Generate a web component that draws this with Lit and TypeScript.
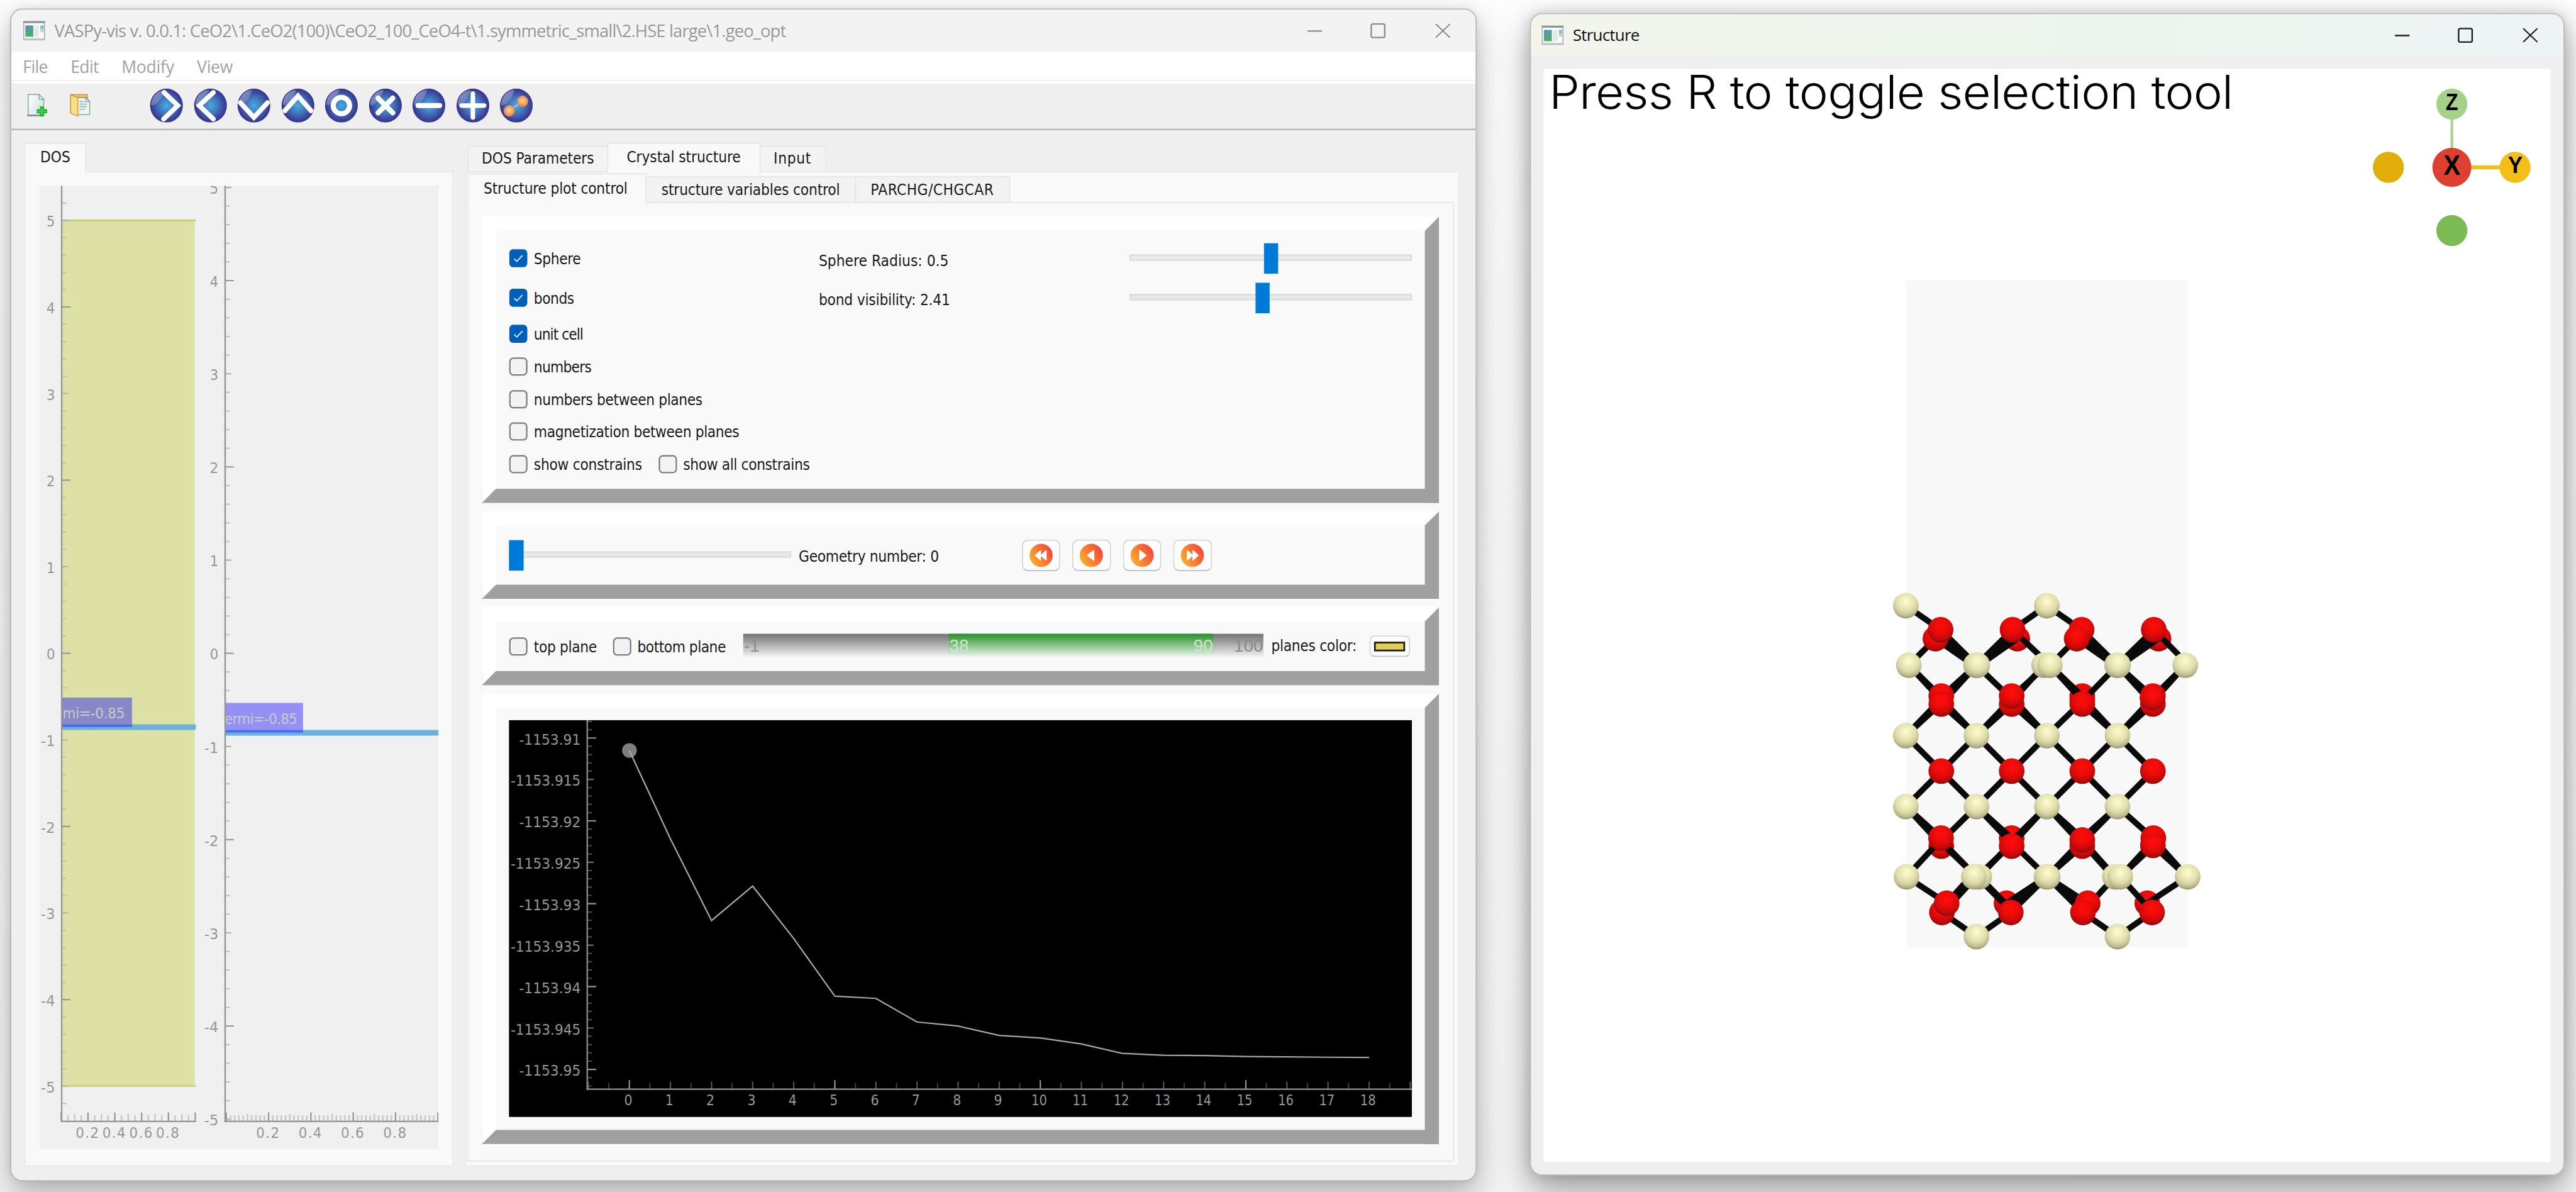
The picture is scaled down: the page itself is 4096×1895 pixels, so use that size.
import { LitElement, html, svg, css } from "lit";
import { customElement, property } from "lit/decorators.js";

const UI_FONT = `"DejaVu Sans Condensed", "DejaVu Sans", "Noto Sans", sans-serif`;

/** A single line of text tracked (or stretched) so that it occupies exactly `w` pixels. */
@customElement("fit-label")
class FitLabel extends LitElement {
  @property({ type: Number }) w = 0;
  @property() text = "";
  @property({ type: Boolean }) stretch = false;
  static styles = css`
    :host { display: inline-block; white-space: pre; }
    .t { display: inline-block; transform-origin: 0 50%; }
  `;
  updated() {
    const el = this.renderRoot.querySelector(".t") as HTMLElement;
    el.style.letterSpacing = this.stretch ? "-0.01em" : "0px";
    const n = this.text.length;
    if (!this.w || n < 2) return;
    if (this.stretch) {
      el.style.transform = `scaleX(${this.w / el.offsetWidth})`;
    } else {
      el.style.letterSpacing = `${(this.w - el.offsetWidth) / (n - 1)}px`;
    }
  }
  render() {
    return html`<span class="t">${this.text}</span>`;
  }
}

/** Check box with its caption. */
@customElement("check-item")
class CheckItem extends LitElement {
  @property({ type: Boolean }) checked = false;
  @property() text = "";
  @property({ type: Number }) w = 0;
  static styles = css`
    :host { display: inline-flex; align-items: center; gap: 11px; }
    svg { display: block; flex: none; }
    .cap { padding-top: 3px; }
  `;
  render() {
    return html`
      <svg width="33" height="33" viewBox="0 0 33 33">
        ${this.checked
          ? svg`<rect x="0.5" y="0.5" width="32" height="32" rx="7" fill="#005fb8"/>
                <path d="M9 17.5 L14 22 L24 11.5" fill="none" stroke="#cfe3f5" stroke-width="2.2"/>`
          : svg`<rect x="1.5" y="1.5" width="30" height="30" rx="6.5" fill="#f3f3f3" stroke="#7d7d7d" stroke-width="2.6"/>`}
      </svg>
      <fit-label class="cap" .text=${this.text} .w=${this.w}></fit-label>
    `;
  }
}

/** Horizontal slider: `pos` is the left edge of the handle. */
@customElement("flat-slider")
class FlatSlider extends LitElement {
  @property({ type: Number }) pos = 0;
  static styles = css`
    :host { display: block; position: relative; width: 500px; height: 54px; }
    .track { height: 11px; box-sizing: border-box; background: #e7eae9; border: 2.6px solid #d6d9d8; position: relative; top: 20px; }
    .handle { position: absolute; top: 0; width: 25.5px; height: 54px; background: #007ad9; }
  `;
  render() {
    return html`<div class="track"></div><div class="handle" style="left:${this.pos}px"></div>`;
  }
}

const range = (a: number, b: number) => Array.from({ length: b - a + 1 }, (_, i) => a + i);

/** Density-of-states plots with the Fermi level marker. */
@customElement("dos-plots")
class DosPlots extends LitElement {
  static styles = css`
    :host { display: block; }
    svg { display: block; background: #f0f0f0; font-family: ${css([UI_FONT] as any)}; }
    text { font-size: 26.5px; fill: #969696; }
  `;

  yAxis(x: number, unit: number, limit: number) {
    const y0 = 828.5;
    return range(-limit, limit).map((k) => {
      const y = y0 - (k / 5) * unit;
      const whole = k % 5 === 0;
      const even = k % 10 === 0;
      const len = even ? 15.5 : whole ? 11 : 8;
      const v = k / 5;
      return svg`
        <line x1=${x} x2=${x + len} y1=${y} y2=${y} stroke=${even ? "#999" : whole ? "#b0b0b0" : "#c2c2bb"} stroke-width="2.4"/>
        ${whole
          ? svg`<text x=${x - 12} y=${y + 11} text-anchor="end" textLength=${v < 0 ? 25 : 15} lengthAdjust="spacingAndGlyphs">${v}</text>`
          : ""}`;
    });
  }

  xAxis(x: number, unit: number, count: number) {
    return range(0, count).map((k) => {
      const f = k / count;
      const px = x + f * unit;
      const major = Math.abs((f * 5) % 1) < 1e-6 || Math.abs((f * 5) % 1) > 1 - 1e-6;
      const mid = Math.abs((f * 10) % 1) < 1e-6 || Math.abs((f * 10) % 1) > 1 - 1e-6;
      const len = major ? 16 : mid ? 13.5 : 11;
      return svg`
        <line x1=${px} x2=${px} y1="1658" y2=${1658 - len} stroke=${major ? "#9a9a9a" : "#c6c6c6"} stroke-width="2.6"/>
        ${major && k > 0 && k < count
          ? svg`<text x=${px - 1.5} y="1687" text-anchor="middle" textLength="41" lengthAdjust="spacing">${f.toFixed(1)}</text>`
          : ""}`;
    });
  }

  render() {
    return html`<svg width="707" height="1707" viewBox="0 0 707 1707">
      <clipPath id="p1"><rect x="40" y="0" width="240" height="1700"/></clipPath>
      <clipPath id="p2"><rect x="330" y="0" width="377" height="1700"/></clipPath>
      <rect x="40" y="61.3" width="235" height="1534" fill="#dde1a5"/>
      <rect x="40" y="60" width="237" height="3" fill="#c9cc6c"/>
      <rect x="40" y="1594" width="237" height="2.4" fill="#c9cc6c"/>
      ${this.yAxis(39.5, 153.4, 26)}
      ${this.yAxis(329, 165.1, 25)}
      ${this.xAxis(38.5, 237.5, 20)}
      ${this.xAxis(331, 375, 50)}
      <rect x="40" y="954.4" width="237" height="10" fill="#6ab2dc"/>
      <rect x="40" y="907" width="124" height="52" fill="#8888c8"/>
      <rect x="40" y="954.4" width="124" height="4.8" fill="#4372e4"/>
      <rect x="330" y="964.4" width="377" height="10" fill="#6ab2dc"/>
      <rect x="330" y="916.4" width="137" height="52.4" fill="#9590f6"/>
      <rect x="330" y="964.4" width="137" height="4.6" fill="#4a6ff0"/>
      <g clip-path="url(#p1)"><text x="41" y="944" style="fill:#cacaca" textLength="110">mi=-0.85</text></g>
      <g clip-path="url(#p2)"><text x="328" y="954" style="fill:#cacaca" textLength="129">ermi=-0.85</text></g>
      <rect x="38" y="0" width="2.6" height="1659" fill="#969696"/>
      <rect x="327.6" y="0" width="2.8" height="1659" fill="#969696"/>
      <rect x="38" y="1656.6" width="239.5" height="2.6" fill="#969696"/>
      <rect x="327.6" y="1656.6" width="379.4" height="2.6" fill="#969696"/>
    </svg>`;
  }
}

/** Total energy against geometry step. */
@customElement("energy-plot")
class EnergyPlot extends LitElement {
  static styles = css`
    :host { display: block; }
    svg { display: block; background: #000; font-family: ${css([UI_FONT] as any)}; }
    text { font-size: 26.5px; fill: #969696; }
  `;
  energies = [53.7, 210.5, 355, 294, 387, 489, 493, 534.8, 542, 558.7, 563, 573.7, 590.4, 593.7, 594.3, 596, 596.6, 597.2, 597.6];
  render() {
    const x = (i: number) => 213.3 + i * 72.83;
    const y = (k: number) => 31.6 + k * 14.68;
    return html`<svg width="1600.5" height="703" viewBox="0 0 1600.5 703">
      ${range(-2, 42).map((k) => {
        const labelled = k >= 0 && k % 5 === 0 && k <= 40;
        const long = labelled && k % 10 === 0;
        const len = long ? 15.5 : labelled ? 11 : 8;
        const value = `-1153.9${1 + Math.floor(k / 10)}${long ? "" : "5"}`;
        return svg`
          <line x1="139" x2=${139 + len} y1=${y(k)} y2=${y(k)} stroke=${long ? "#969696" : labelled ? "#6c6c6c" : "#474747"} stroke-width="2.4"/>
          ${labelled
            ? svg`<text x="127" y=${y(k) + 11.5} text-anchor="end" textLength=${long ? 109 : 124} lengthAdjust="spacingAndGlyphs">${value}</text>`
            : ""}`;
      })}
      ${range(-2, 38).map((k) => {
        const i = k / 2;
        const whole = k % 2 === 0;
        const five = whole && i % 5 === 0;
        const len = five ? 16 : whole ? 13.5 : 11;
        const label = whole && i >= 0 && i <= 18;
        return svg`
          <line x1=${x(i)} x2=${x(i)} y1="654" y2=${654 - len} stroke=${five ? "#969696" : whole ? "#555" : "#3c3c3c"} stroke-width="2.4"/>
          ${label
            ? svg`<text x=${x(i) - 2} y="682.5" text-anchor="middle" textLength=${i > 9 ? 27.5 : 14.5} lengthAdjust="spacingAndGlyphs">${i}</text>`
            : ""}`;
      })}
      <rect x="137.4" y="0" width="2.4" height="655" fill="#969696"/>
      <rect x="137.4" y="652.6" width="1463" height="2.4" fill="#969696"/>
      <circle cx="213.5" cy="53.7" r="13" fill="#7f7f7f"/>
      <polyline points=${this.energies.map((e, i) => `${x(i)},${e}`).join(" ")} fill="none" stroke="#a6a6a6" stroke-width="2.5"/>
    </svg>`;
  }
}

type P = [number, number];
type Bond = [number, number, number, number];

@customElement("slab-view")
class SlabView extends LitElement {
  static styles = css`
    :host { display: block; width: 600px; height: 1220px; }
    svg { display: block; overflow: visible; }
  `;
  oBack: P[] = [
    [666, 240], [1320, 240], [967, 478], [967, 495],
    [314, 1100], [640, 1067], [616, 1337], [1268, 1337],
  ];
  oFront: P[] = [
    [287, 240], [964, 203],
    [311, 203], [644, 203], [941, 240], [1298, 203],
    [314, 478], [314, 511], [640, 511], [640, 478], [967, 511], [1294, 511], [1294, 478], [1292, 485],
    [314, 789], [640, 789], [967, 789], [1294, 789],
    [313, 1067], [640, 1100], [967, 1100], [967, 1075], [1296, 1067], [1294, 1097],
    [317, 1375], [339, 1337], [636, 1375], [992, 1337], [970, 1375], [1290, 1375],
  ];
  ce: P[] = [
    [150, 103], [803, 103],
    [164, 350], [474, 350], [481, 350], [790, 350], [817, 350], [1127, 350], [1133, 350], [1444, 350],
    [150, 642], [477, 642], [803, 642], [1130, 642],
    [150, 936], [477, 936], [803, 936], [1130, 936],
    [153, 1227], [490, 1227], [465, 1227], [801, 1227], [807, 1227], [1118, 1227], [1143, 1227], [1455, 1227],
    [477, 1475], [1130, 1475],
  ];
  bonds: Bond[] = [
    [150, 103, 311, 203], [287, 240, 164, 350], [311, 203, 477, 350], [287, 240, 477, 358], [300, 222, 477, 354],
    [803, 103, 644, 203], [803, 103, 964, 203], [644, 203, 477, 350], [666, 240, 477, 358], [655, 222, 477, 354],
    [644, 203, 817, 350], [941, 240, 817, 350], [964, 203, 1130, 350], [941, 240, 1130, 358], [952, 222, 1130, 354],
    [1298, 203, 1130, 350], [1320, 240, 1130, 358], [1309, 222, 1130, 354], [1298, 203, 1460, 350],
    [164, 350, 314, 482], [164, 350, 314, 495], [477, 350, 314, 482], [477, 350, 314, 511], [477, 350, 640, 490],
    [803, 350, 640, 482], [790, 350, 640, 500], [817, 350, 967, 478], [817, 350, 950, 480], [1130, 350, 967, 500],
    [1130, 350, 1294, 482], [1130, 350, 1294, 511], [1444, 350, 1294, 482], [1444, 350, 1294, 500],
    [314, 490, 150, 642], [314, 508, 150, 642], [314, 490, 477, 642], [314, 511, 477, 642],
    [640, 490, 477, 642], [640, 511, 477, 642], [640, 482, 803, 642], [640, 511, 803, 642],
    [967, 500, 803, 642], [967, 485, 1130, 642], [967, 511, 1130, 642], [1294, 485, 1130, 642], [1294, 511, 1130, 642],
    [150, 642, 314, 789], [477, 642, 314, 789], [477, 642, 640, 789], [803, 642, 640, 789],
    [803, 642, 967, 789], [1130, 642, 967, 789], [1130, 642, 1294, 789],
    [150, 936, 314, 789], [477, 936, 314, 789], [477, 936, 640, 789], [803, 936, 640, 789],
    [803, 936, 967, 789], [1130, 936, 967, 789], [1130, 936, 1294, 789],
    [150, 936, 314, 1067], [150, 936, 314, 1095], [477, 936, 314, 1080], [477, 936, 640, 1067], [477, 936, 640, 1088],
    [803, 936, 650, 1070], [803, 936, 655, 1080], [803, 936, 967, 1067], [803, 936, 967, 1095],
    [1130, 936, 967, 1067], [1130, 936, 967, 1085], [1130, 936, 1294, 1067],
    [153, 1227, 300, 1085], [477, 1227, 320, 1083], [477, 1227, 330, 1100], [490, 1227, 640, 1085], [480, 1227, 640, 1092],
    [803, 1227, 640, 1085], [803, 1227, 967, 1075], [803, 1227, 967, 1100], [1110, 1227, 967, 1085], [1118, 1227, 967, 1075],
    [1143, 1227, 1294, 1080], [1143, 1227, 1294, 1100], [1453, 1227, 1294, 1067], [1453, 1227, 1294, 1097],
    [153, 1227, 345, 1340], [475, 1227, 339, 1360], [450, 1227, 339, 1337], [490, 1227, 636, 1360], [480, 1227, 610, 1345],
    [803, 1227, 616, 1337], [803, 1227, 636, 1375], [803, 1227, 626, 1356],
    [803, 1227, 992, 1337], [803, 1227, 970, 1375], [803, 1227, 981, 1356],
    [1118, 1227, 992, 1350], [1143, 1227, 1270, 1352], [1455, 1227, 1268, 1337],
    [477, 1475, 317, 1375], [477, 1475, 636, 1375], [1130, 1475, 970, 1375], [1130, 1475, 1290, 1375],
  ];
  render() {
    const X = (v: number) => v / 2.613;
    const Y = (v: number) => v / 2.34;
    const ball = (fill: string) => ([a, b]: P) => svg`<circle cx=${X(a)} cy=${Y(b)} r="22.7" fill=${fill}/>`;
    return html`<svg width="600" height="1220" viewBox="0 -540 600 1220">
      <defs>
        <radialGradient id="o" cx="0.5" cy="0.35" r="0.68">
          <stop offset="0" stop-color="#ff0d09"/><stop offset="0.4" stop-color="#ee0b0a"/>
          <stop offset="0.7" stop-color="#cc0a0a"/><stop offset="1" stop-color="#8c0808"/>
        </radialGradient>
        <radialGradient id="c" cx="0.5" cy="0.34" r="0.7">
          <stop offset="0" stop-color="#fdfdd0"/><stop offset="0.25" stop-color="#f1efbf"/><stop offset="0.55" stop-color="#e0ddab"/>
          <stop offset="0.8" stop-color="#bdba90"/><stop offset="1" stop-color="#85835f"/>
        </radialGradient>
      </defs>
      <rect x="57.8" y="-532.5" width="499.8" height="1182" fill="#f8f8f8"/>
      ${this.oBack.map(ball("url(#o)"))}
      ${this.bonds.map(([a, b, c, d]) => svg`<line x1=${X(a)} y1=${Y(b)} x2=${X(c)} y2=${Y(d)} stroke="#0a0a0a" stroke-width="10.5"/>`)}
      ${this.oFront.map(ball("url(#o)"))}
      ${this.ce.map(ball("url(#c)"))}
    </svg>`;
  }
}

const appIcon = html`<svg width="39" height="35" viewBox="0 0 39 35">
  <defs><linearGradient id="ag" x1="0" y1="0" x2="0.4" y2="1"><stop offset="0" stop-color="#5b8fc4"/><stop offset="1" stop-color="#4fae62"/></linearGradient></defs>
  <rect x="1" y="1" width="37" height="32.5" fill="#fafafa" stroke="#a9adb1" stroke-width="2"/>
  <rect x="0" y="0.5" width="39" height="3.5" fill="#8f969b"/>
  <rect x="2" y="30.5" width="35" height="2" fill="#cfd4d8"/>
  <rect x="4" y="8" width="14" height="20" fill="url(#ag)"/>
  <rect x="20" y="8" width="8" height="20" fill="#e6e6e6"/>
  <rect x="30.5" y="8" width="6" height="7" fill="#8fb4e0"/><rect x="30.5" y="14" width="6" height="6" fill="#b9dcae"/>
</svg>`;

const windowButtons = (color: string) => html`<svg width="254" height="27" viewBox="0 0 254 27" fill="none" stroke=${color} stroke-width="2.6">
  <path d="M0 14H26"/>
  <rect x="113" y="1.5" width="24" height="24" rx="3"/>
  <path d="M227.500 1.500L252.500 25.500M252.500 1.500L227.500 25.500" stroke-width="2.3"/>
</svg>`;

@customElement("app-root")
class AppRoot extends LitElement {
  static styles = css`
    :host { display: block; width: 4096px; height: 1895px; overflow: hidden; background: #f7f7f7; }
    .desk { position: relative; width: 4565px; height: 2112px; transform: scale(0.89726); transform-origin: 0 0;
      font-family: ${css([UI_FONT] as any)}; font-size: 27px; line-height: 34px; color: #1a1a1a;
      background: linear-gradient(#fdfdfd, #f4f4f4); overflow: hidden; }
    .win { position: absolute; box-sizing: border-box; border: 2.5px solid #b4b4b4; border-radius: 22px; overflow: hidden;
      display: flex; flex-direction: column; background: #efefef; }
    .shade { position: absolute; border-radius: 22px; }
    .main { left: 18px; top: 15px; width: 2599px; height: 2078px; }
    .main-shade { left: 18px; top: 15px; width: 2599px; height: 2078px; box-shadow: 0 24px 56px rgba(0,0,0,.28), 0 0 14px rgba(0,0,0,.08); }
    .side { left: 2711px; top: 23px; width: 1834px; height: 2060px; }
    .side-shade { left: 2711px; top: 23px; width: 1834px; height: 2060px; box-shadow: 0 24px 60px rgba(0,0,0,.36), 0 0 22px rgba(0,0,0,.14); }
    .title { display: flex; align-items: center; flex: none; box-sizing: border-box; font-family: "Open Sans", "Noto Sans", sans-serif; }
    .main .title { height: 75px; padding: 0 44px 1px 20.5px; background: #f3f3f3; color: #999; font-size: 30.5px; }
    .side .title { height: 75px; padding: 0 45px 1px 19px; background: linear-gradient(100deg, #f3f5eb, #ebf5ed 60%, #eef4f6); font-size: 29px; color: #111; }
    .title fit-label { margin-left: 17px; }
    .side .title fit-label { margin-left: 16px; }
    .title .grow { flex: 1; }
    .menu { display: flex; align-items: center; flex: none; height: 50px; padding: 2px 0 0 20.500px; background: #fff; box-sizing: border-box;
      font-family: "Open Sans", "Noto Sans", sans-serif; font-size: 29.500px; color: #a2a2a2; }
    .menu fit-label { margin-right: 40.500px; }
    .menuline { height: 5.500px; flex: none; border-top: 2.500px solid #efefef; background: #fff; box-sizing: border-box; }
    .tools { height: 83px; box-sizing: border-box; flex: none; display: flex; align-items: center; padding: 0 0 2px 26px; background: #efefef; border-bottom: 3px solid #b9b9b9; }
    .tools svg { display: block; }
    .tools .file { margin-right: 38px; }
    .tools .folder { margin-right: 105px; }
    .tools .orb { margin-right: 17.500px; }
    .body { flex: 1; display: flex; gap: 19.500px; padding: 22px 27px 24px 23px; background: #efefef; min-height: 0; }
    .col { display: flex; flex-direction: column; }
    .left { width: 761px; }
    .right { width: 1763px; }
    .tabs { display: flex; align-items: flex-end; flex: none; }
    .tab { box-sizing: border-box; border: 2.500px solid #e6e6e6; border-bottom: 0; background: #f3f3f3; display: flex; justify-content: center; align-items: center; margin-right: -2.500px; }
    .tab.on { background: #f9f9f9; margin-bottom: -3px; padding-bottom: 3px; z-index: 1; }
    .outer .tab { height: 45px; }
    .outer .tab.on { height: 53px; }
    .inner .tab { height: 46px; padding-top: 2px; }
    .inner .tab.on { height: 54px; padding-right: 5px; }
    .panel { flex: 1; min-height: 0; box-sizing: border-box; border: 2.500px solid #e6e6e6; background: #f9f9f9; }
    .left .panel { padding: 24.500px; }
    .right > .panel { padding: 2px 8px 7px 2.500px; display: flex; flex-direction: column; }
    .outer.r { padding-left: 5px; }
    .frames { display: flex; flex-direction: column; gap: 15px; padding: 24px 0 0 24px; }
    .frame { width: 1696px; box-sizing: border-box; border: 25px solid; border-color: #fff #a0a0a0 #a0a0a0 #fff; }
    .f1 { height: 507.500px; padding: 14px 22px 0 23px; display: grid; grid-template-columns: 549px 551px 501px; grid-template-rows: 70px 70px 58.500px 57.600px 57.600px 57.600px 57.600px; align-items: center; }
    .f1 .wide { grid-column: 1 / 4; }
    .f1 .pair { grid-column: 1 / 4; display: flex; gap: 29px; align-items: center; }
    .f1 .val { padding-top: 9px; }
    .f2 { height: 155px; padding: 0 23px; display: flex; align-items: center; }
    .f2 fit-label { margin: 5px 0 0 13.500px; }
    .btns { display: flex; gap: 21px; margin-left: 147px; }
    .btn { box-sizing: border-box; width: 68.500px; height: 56px; border: 2.500px solid #d2d2d2; border-bottom-color: #bdbdbd; border-radius: 11px; background: #fdfdfd; display: flex; align-items: center; justify-content: center; }
    .f3 { height: 138px; padding: 0 22px 0 23px; display: flex; align-items: center; }
    .f3 check-item + check-item { margin-left: 28px; }
    .rangebar { display: flex; width: 922px; height: 42px; margin-left: 31.500px; margin-right: 13.500px; position: relative; top: -1px;
      font-family: "Liberation Sans", sans-serif; font-size: 31px; line-height: 43px; color: #8e8e8e; background: linear-gradient(#727272, #b4b4b4 50%, #f6f6f6); }
    .rangebar div { display: flex; box-sizing: border-box; padding: 0 1px; }
    .r1 { width: 364px; }
    .r2 { width: 469px; justify-content: space-between; color: #cde6cd; background: linear-gradient(#289029, #8cc48c 50%, #f4f9f4); }
    .r3 { flex: 1; justify-content: flex-end; color: #8a8a8a; }
    .btn.color { width: 72px; height: 38px; margin-left: 23px; border-radius: 9px; }
    .swatch { width: 49px; height: 11px; border: 3px solid #1b1a12; background: #e2ce55; }
    .f4 { height: 797.500px; padding: 22px 22px 0 22.500px; }
    .canvas { flex: none; width: 1785.500px; height: 1937px; margin: 22px 0 0 21.500px; background: #fff; position: relative; overflow: hidden; }
    .hint { display: block; padding: 0 0 0 10px; font-family: "Inter", sans-serif; font-weight: 350; font-size: 82.500px; line-height: 82px; color: #000; }
    .gizmo { position: absolute; left: 1450px; top: 20px; font-family: "Liberation Sans", sans-serif; font-weight: 700; }
    .slab { position: absolute; left: 585px; top: 367px; }
  `;

  orb(kind: string) {
    const shapes: Record<string, unknown> = {
      right: svg`<path d="M-4 -23L20 0L-5 24"/>`,
      left: svg`<path d="M5 -23L-20 0L5 24"/>`,
      down: svg`<path d="M-24 -5L0 21L24 -5"/>`,
      up: svg`<path d="M-23 9L0 -17L23 9"/>`,
      ring: svg`<circle r="14.500" stroke-width="9"/>`,
      cross: svg`<path d="M-13 -13L13 13M13 -13L-13 13" stroke-width="9"/>`,
      minus: svg`<path d="M-19 0H19" stroke-width="9"/>`,
      plus: svg`<path d="M-20 0H20M0 -21V21" stroke-width="8"/>`,
      bond: svg`<path d="M-9 6L8 -4" stroke="#8cc4ea" stroke-width="3"/>
        <circle cx="11" cy="-7.500" r="10" fill="url(#ball)" stroke="none"/><circle cx="-12.500" cy="9.500" r="10" fill="url(#ball)" stroke="none"/>`,
    };
    return html`<svg class="orb" width="60" height="60" viewBox="-30 -30 60 60">
      <defs>
        <radialGradient id="orb"><stop offset="0" stop-color="#48ace0"/><stop offset="0.55" stop-color="#3f6cb6"/><stop offset="1" stop-color="#37308c"/></radialGradient>
        <radialGradient id="ball" cx="0.5" cy="0.45"><stop offset="0" stop-color="#ffd9b0"/><stop offset="1" stop-color="#ee8436"/></radialGradient>
        <linearGradient id="gl" x1="0" y1="0" x2="1" y2="1"><stop offset="0" stop-color="#fff" stop-opacity="0.6"/><stop offset="0.9" stop-color="#fff" stop-opacity="0"/></linearGradient>
      </defs>
      <ellipse rx="29" ry="30" fill="url(#orb)"/>
      <path d="M-27 -2C-26 -17 -15 -27 -3 -27.500C-8 -12 -14 -4 -24 0Z" fill="url(#gl)"/>
      <g fill="none" stroke="#fff" stroke-width="8.500" stroke-linecap="round">${shapes[kind]}</g>
    </svg>`;
  }

  player(kind: number) {
    const glyphs = [
      svg`<path d="M-10.500 0L-1 -8.500V8.500ZM-0.500 0L9 -8.500V8.500Z"/>`,
      svg`<path d="M-7 0L4.500 -9V9Z"/>`,
      svg`<path d="M7 0L-4.500 -9V9Z"/>`,
      svg`<path d="M10.500 0L1 -8.500V8.500ZM0.500 0L-9 -8.500V8.500Z"/>`,
    ];
    return html`<div class="btn"><svg width="42" height="42" viewBox="-21 -21 42 42">
      <defs><linearGradient id="pg" x1="0" y1="0.8" x2="1" y2="0.2"><stop offset="0" stop-color="#fdb32b"/><stop offset="0.5" stop-color="#fa7733"/><stop offset="1" stop-color="#f3403a"/></linearGradient></defs>
      <circle r="20.500" fill="url(#pg)"/>
      <g fill="#fff" stroke="#fff" stroke-width="1.500" stroke-linejoin="round">${glyphs[kind]}</g>
    </svg></div>`;
  }

  tab(text: string, w: number, width: number, on = false) {
    return html`<div class="tab ${on ? "on" : ""}" style="width:${width}px"><fit-label .text=${text} .w=${w}></fit-label></div>`;
  }

  render() {
    return html`<div class="desk">
      <div class="shade main-shade"></div>
      <div class="shade side-shade"></div>

      <div class="win main">
        <div class="title">
          ${appIcon}
          <fit-label .text=${"VASPy-vis v. 0.0.1: CeO2\\1.CeO2(100)\\CeO2_100_CeO4-t\\1.symmetric_small\\2.HSE large\\1.geo_opt"} .w=${1297}></fit-label>
          <span class="grow"></span>
          ${windowButtons("#8c8c8c")}
        </div>
        <div class="menu">
          <fit-label .text=${"File"} .w=${45}></fit-label>
          <fit-label .text=${"Edit"} .w=${50}></fit-label>
          <fit-label .text=${"Modify"} .w=${93}></fit-label>
          <fit-label .text=${"View"} .w=${63}></fit-label>
        </div>
        <div class="menuline"></div>
        <div class="tools">
          <svg class="file" width="40" height="41" viewBox="0 0 40 41">
            <defs><linearGradient id="dg" x1="0" y1="0" x2="1" y2="0.6"><stop offset="0" stop-color="#ffffff"/><stop offset="1" stop-color="#d3e6e2"/></linearGradient></defs>
            <path d="M4 1.500H23L31.500 10V38H4Z" fill="url(#dg)" stroke="#84a39f" stroke-width="1.600"/>
            <path d="M2 38.800H32" stroke="#6f8a86" stroke-width="2"/>
            <path d="M23.500 1.500V10H31.500Z" fill="#f6fafa" stroke="#84a39f" stroke-width="1.600"/>
            <path d="M25.500 23.500H31V28.500H36.500V34H31V39.500H25.500V34H20V28.500H25.500Z" fill="#35d746" stroke="#139a24" stroke-width="1.500"/>
          </svg>
          <svg class="folder" width="36" height="41" viewBox="0 0 36 41">
            <rect x="1" y="1.500" width="30" height="33" fill="#f0c35f" stroke="#c2923a" stroke-width="1.500"/>
            <path d="M13 7H28L35 14V37H13Z" fill="#edf6f5" stroke="#7c9a98" stroke-width="1.600"/>
            <path d="M28 7V14H35Z" fill="#fff" stroke="#7c9a98" stroke-width="1.500"/>
            <path d="M17 14H25M17 18.500H30M17 23H30M17 27.500H27" stroke="#a9b9b8" stroke-width="2.200"/>
            <path d="M1 1.500L14 7V40L1 34.500Z" fill="#fbdd83" stroke="#c2923a" stroke-width="1.500"/>
          </svg>
          ${["right", "left", "down", "up", "ring", "cross", "minus", "plus", "bond"].map((k) => this.orb(k))}
        </div>
        <div class="body">
          <div class="col left">
            <div class="tabs outer">${this.tab("DOS", 53, 110, true)}</div>
            <div class="panel"><dos-plots></dos-plots></div>
          </div>
          <div class="col right">
            <div class="tabs outer r">
              ${this.tab("DOS Parameters", 199, 249.5)}
              ${this.tab("Crystal structure", 202, 272, true)}
              ${this.tab("Input", 66, 118.5)}
            </div>
            <div class="panel">
              <div class="tabs inner">
                ${this.tab("Structure plot control", 255, 318, true)}
                ${this.tab("structure variables control", 316, 373.5)}
                ${this.tab("PARCHG/CHGCAR", 218, 275)}
              </div>
              <div class="panel">
                <div class="frames">
                  <div class="frame f1">
                    <check-item checked .text=${"Sphere"} .w=${84}></check-item>
                    <fit-label class="val" .text=${"Sphere Radius: 0.5"} .w=${230}></fit-label>
                    <flat-slider .pos=${237.5}></flat-slider>
                    <check-item checked .text=${"bonds"} .w=${72}></check-item>
                    <fit-label class="val" .text=${"bond visibility: 2.41"} .w=${233}></fit-label>
                    <flat-slider .pos=${222.5}></flat-slider>
                    <check-item class="wide" checked .text=${"unit cell"} .w=${88.5}></check-item>
                    <check-item class="wide" .text=${"numbers"} .w=${102}></check-item>
                    <check-item class="wide" .text=${"numbers between planes"} .w=${299}></check-item>
                    <check-item class="wide" .text=${"magnetization between planes"} .w=${364}></check-item>
                    <div class="pair">
                      <check-item .text=${"show constrains"} .w=${192}></check-item>
                      <check-item .text=${"show all constrains"} .w=${224.5}></check-item>
                    </div>
                  </div>
                  <div class="frame f2">
                    <flat-slider .pos=${0}></flat-slider>
                    <fit-label .text=${"Geometry number: 0"} .w=${249}></fit-label>
                    <div class="btns">${[0, 1, 2, 3].map((k) => this.player(k))}</div>
                  </div>
                  <div class="frame f3">
                    <check-item .text=${"top plane"} .w=${112}></check-item>
                    <check-item .text=${"bottom plane"} .w=${157}></check-item>
                    <div class="rangebar">
                      <div class="r1">-1</div>
                      <div class="r2"><span>38</span><span>90</span></div>
                      <div class="r3">100</div>
                    </div>
                    <fit-label .text=${"planes color:"} .w=${151}></fit-label>
                    <div class="btn color"><div class="swatch"></div></div>
                  </div>
                  <div class="frame f4"><energy-plot></energy-plot></div>
                </div>
              </div>
            </div>
          </div>
        </div>
      </div>

      <div class="win side">
        <div class="title">
          ${appIcon}
          <fit-label .text=${"Structure"} .w=${119}></fit-label>
          <span class="grow"></span>
          ${windowButtons("#1c1c1c")}
        </div>
        <div class="canvas">
          <fit-label class="hint" stretch .text=${"Press R to toggle selection tool"} .w=${1212}></fit-label>
          <svg class="gizmo" width="320" height="300" viewBox="0 0 320 300">
            <path d="M160 42V155" stroke="#a5d18b" stroke-width="4.500"/>
            <path d="M160 154.500H272" stroke="#f2be17" stroke-width="6.500"/>
            <circle cx="160" cy="42.500" r="27.500" fill="#a5d18b"/>
            <circle cx="47.500" cy="154.500" r="27.500" fill="#e2ae0a"/>
            <circle cx="272" cy="154.500" r="27.500" fill="#f2be17"/>
            <circle cx="160" cy="266.500" r="27.500" fill="#7dbb57"/>
            <circle cx="160" cy="154.500" r="34.500" fill="#dd3f30"/>
            <text x="160" y="52.500" font-size="41" text-anchor="middle" textLength="22" lengthAdjust="spacingAndGlyphs">Z</text>
            <text x="160" y="168" font-size="49" text-anchor="middle" textLength="30" lengthAdjust="spacingAndGlyphs">X</text>
            <text x="272.500" y="165" font-size="41" text-anchor="middle" textLength="26" lengthAdjust="spacingAndGlyphs">Y</text>
          </svg>
          <slab-view class="slab"></slab-view>
        </div>
      </div>
    </div>`;
  }
}
